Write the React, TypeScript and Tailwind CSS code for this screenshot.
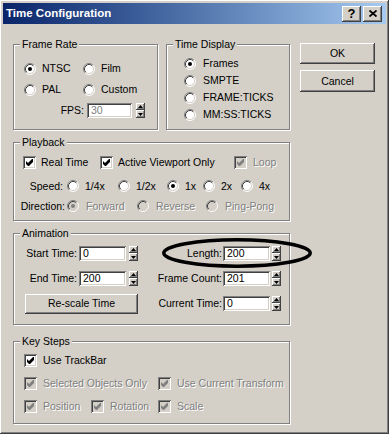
import React from 'react';

// classic 3D bevels
const raised = 'shadow-[inset_-1px_-1px_0_#404040,inset_1px_1px_0_#fff,inset_-2px_-2px_0_#808080,inset_2px_2px_0_#d4d0c8]';
const sunken = 'shadow-[inset_1px_1px_0_#808080,inset_-1px_-1px_0_#fff,inset_2px_2px_0_#404040,inset_-2px_-2px_0_#d4d0c8]';
const dimText = 'text-[#808080] [text-shadow:1px_1px_0_#fff]';

const Radio: React.FC<{ on?: boolean; off?: boolean }> = ({ on, off }) => (
    <svg width="12" height="12" viewBox="0 0 12 12" className="shrink-0">
        <circle cx="6" cy="6" r="5" fill={off ? '#d4d0c8' : '#fff'} />
        <path d="M2.11 9.89A5.5 5.5 0 0 1 9.89 2.11" stroke="#808080" fill="none" />
        <path d="M9.89 2.11A5.5 5.5 0 0 1 2.11 9.89" stroke="#fff" fill="none" />
        <path d="M2.82 9.18A4.5 4.5 0 0 1 9.18 2.82" stroke="#404040" fill="none" />
        <path d="M9.18 2.82A4.5 4.5 0 0 1 2.82 9.18" stroke="#d4d0c8" fill="none" />
        {on && <circle cx="6" cy="6" r="2" fill={off ? '#808080' : '#000'} />}
    </svg>
);

const Box: React.FC<{ on?: boolean; off?: boolean }> = ({ on, off }) => (
    <span className={`w-[13px] h-[13px] shrink-0 ${off ? 'bg-[#d4d0c8]' : 'bg-white'} ${sunken}`}>
        {on && (
            <svg width="13" height="13" viewBox="0 0 13 13">
                <polygon points="3,5 5,7 9,3 10,3 10,6 6,10 5,10 3,8" fill={off ? '#808080' : '#000'} />
            </svg>
        )}
    </span>
);

const RadioItem: React.FC<{ label: string; on?: boolean; off?: boolean; w?: string; gap?: string }> = ({ label, on, off, w = '', gap = 'gap-[6px]' }) => (
    <div className={`flex items-center ${gap} ${w}`}>
        <Radio on={on} off={off} />
        <span className={off ? dimText : ''}>{label}</span>
    </div>
);

const CheckItem: React.FC<{ label: string; on?: boolean; off?: boolean; w?: string; gap?: string }> = ({ label, on, off, w = '', gap = 'gap-[6px]' }) => (
    <div className={`flex items-center ${gap} ${w}`}>
        <Box on={on} off={off} />
        <span className={off ? dimText : ''}>{label}</span>
    </div>
);

const Group: React.FC<{ title: string; className?: string; children?: React.ReactNode }> = ({ title, className = '', children }) => (
    <div className={`relative border border-[#808080] shadow-[inset_1px_1px_0_#fff,1px_1px_0_#fff] ${className}`}>
        <span className="absolute left-[6px] -top-[7px] px-[2px] bg-[#d4d0c8] leading-[12px]">{title}</span>
        {children}
    </div>
);

const Spin = () => (
    <div className="w-[9px] h-[15px] flex flex-col shrink-0">
        <div className={`h-[7px] bg-[#d4d0c8] flex items-center justify-center ${raised}`}>
            <svg width="5" height="3" viewBox="0 0 5 3"><polygon points="2.5,0 5,3 0,3" fill="#000" /></svg>
        </div>
        <div className={`h-[8px] bg-[#d4d0c8] flex items-center justify-center ${raised}`}>
            <svg width="5" height="3" viewBox="0 0 5 3"><polygon points="0,0 5,0 2.5,3" fill="#000" /></svg>
        </div>
    </div>
);

const Field: React.FC<{ value: string; off?: boolean; w?: string }> = ({ value, off, w = 'w-[47px]' }) => (
    <div className={`${w} h-[15px] bg-white pl-[4px] leading-[15px] ${sunken} ${off ? 'text-[#808080]' : ''}`}>{value}</div>
);

const SpinRow: React.FC<{ label: string; labelW: string; value: string; fieldGap: string; spinGap: string }> = ({ label, labelW, value, fieldGap, spinGap }) => (
    <div className="flex items-center">
        <span className={`${labelW} text-right`}>{label}</span>
        <div className={fieldGap}><Field value={value} /></div>
        <div className={spinGap}><Spin /></div>
    </div>
);

export default function App() {
    return (
        <div className={`w-[389px] h-[434px] bg-[#d4d0c8] p-[3px] font-['Liberation_Sans',Arial,sans-serif] text-[10.5px] text-black leading-none ${raised}`}>
            {/* Title bar */}
            <div className="h-[21px] flex items-center bg-linear-to-r from-[#0a246a] to-[#a6caf0] pl-[3px] pr-[4px]">
                <span className="text-white font-bold text-[11.5px] flex-1">Time Configuration</span>
                <div className={`w-[19px] h-[16px] bg-[#d4d0c8] flex items-center justify-center font-bold text-[13px] ${raised}`}>?</div>
                <div className={`ml-[2px] w-[19px] h-[16px] bg-[#d4d0c8] flex items-center justify-center ${raised}`}>
                    <svg width="8" height="7" viewBox="0 0 8 7"><path d="M0.5 0.5L7.5 6.5M7.5 0.5L0.5 6.5" stroke="#000" strokeWidth="1.8" /></svg>
                </div>
            </div>

            <div className="px-[10px] pt-[20px]">
                {/* Frame rate / time display / buttons */}
                <div className="flex items-start">
                    <Group title="Frame Rate" className="w-[145px] h-[86px] pt-[13px] pl-[10px]">
                        <div className="h-[21px] flex items-center">
                            <RadioItem label="NTSC" on w="w-[59px]" />
                            <RadioItem label="Film" />
                        </div>
                        <div className="h-[21px] flex items-center">
                            <RadioItem label="PAL" w="w-[59px]" />
                            <RadioItem label="Custom" />
                        </div>
                        <div className="h-[21px] flex items-center">
                            <span className="w-[60px] text-right">FPS:</span>
                            <div className="ml-[3px]"><Field value="30" off w="w-[45px]" /></div>
                            <div className="ml-[4px]"><Spin /></div>
                        </div>
                    </Group>

                    <Group title="Time Display" className="ml-[8px] w-[124px] h-[86px] pt-[10px] pl-[17px]">
                        {['Frames', 'SMPTE', 'FRAME:TICKS', 'MM:SS:TICKS'].map((t, i) => (
                            <div key={t} className="h-[17px] flex items-center">
                                <RadioItem label={t} on={i === 0} gap="gap-[7px]" />
                            </div>
                        ))}
                    </Group>

                    <div className="ml-[10px] -mt-[1px] w-[75px] flex flex-col">
                        <button className={`h-[21px] bg-[#d4d0c8] ${raised}`}>OK</button>
                        <button className={`mt-[6px] h-[22px] bg-[#d4d0c8] ${raised}`}>Cancel</button>
                    </div>
                </div>

                {/* Playback */}
                <Group title="Playback" className="mt-[12px] w-[277px] h-[79px]">
                    <div className="mt-[9px] h-[20px] flex items-center pl-[9px]">
                        <CheckItem label="Real Time" on w="w-[77px]" gap="gap-[5px]" />
                        <CheckItem label="Active Viewport Only" on w="w-[134px]" gap="gap-[5px]" />
                        <CheckItem label="Loop" on off />
                    </div>
                    <div className="mt-[4px] h-[20px] flex items-center">
                        <span className="w-[49px] text-right">Speed:</span>
                        <div className="ml-[4px] flex items-center">
                            <RadioItem label="1/4x" w="w-[51px]" />
                            <RadioItem label="1/2x" w="w-[49px]" />
                            <RadioItem label="1x" on w="w-[36px]" />
                            <RadioItem label="2x" w="w-[38px]" />
                            <RadioItem label="4x" />
                        </div>
                    </div>
                    <div className="h-[20px] flex items-center">
                        <span className="w-[51px] text-right">Direction:</span>
                        <div className="ml-[2px] flex items-center">
                            <RadioItem label="Forward" on off w="w-[70px]" gap="gap-[7px]" />
                            <RadioItem label="Reverse" off w="w-[69px]" gap="gap-[7px]" />
                            <RadioItem label="Ping-Pong" off gap="gap-[7px]" />
                        </div>
                    </div>
                </Group>

                {/* Animation */}
                <Group title="Animation" className="mt-[12px] w-[277px] h-[92px] pt-[7px]">
                    <div className="h-[25px] flex items-center">
                        <SpinRow label="Start Time:" labelW="w-[63px]" value="0" fieldGap="ml-[2px]" spinGap="ml-[3px]" />
                        <SpinRow label="Length:" labelW="w-[84px]" value="200" fieldGap="ml-[1px]" spinGap="ml-[2px]" />
                    </div>
                    <div className="h-[25px] flex items-center">
                        <SpinRow label="End Time:" labelW="w-[63px]" value="200" fieldGap="ml-[2px]" spinGap="ml-[3px]" />
                        <SpinRow label="Frame Count:" labelW="w-[84px]" value="201" fieldGap="ml-[1px]" spinGap="ml-[2px]" />
                    </div>
                    <div className="h-[25px] flex items-center">
                        <button className={`ml-[11px] w-[113px] h-[20px] bg-[#d4d0c8] ${raised}`}>Re-scale Time</button>
                        <SpinRow label="Current Time:" labelW="w-[84px]" value="0" fieldGap="ml-[1px]" spinGap="ml-[2px]" />
                    </div>
                    {/* hand-drawn highlight around Length */}
                    <svg className="absolute left-[148px] top-[4px] overflow-visible" width="150" height="30" viewBox="0 0 150 30">
                        <ellipse cx="75" cy="15" rx="73.2" ry="13.2" fill="none" stroke="#000" strokeWidth="3.5" />
                    </svg>
                </Group>

                {/* Key steps */}
                <Group title="Key Steps" className="mt-[16px] w-[277px] h-[83px] pt-[7px] pl-[10px]">
                    <div className="h-[23px] flex items-center">
                        <CheckItem label="Use TrackBar" on />
                    </div>
                    <div className="h-[23px] flex items-center">
                        <CheckItem label="Selected Objects Only" on off w="w-[134px]" />
                        <CheckItem label="Use Current Transform" on off />
                    </div>
                    <div className="h-[23px] flex items-center">
                        <CheckItem label="Position" on off w="w-[67px]" />
                        <CheckItem label="Rotation" on off w="w-[67px]" />
                        <CheckItem label="Scale" on off />
                    </div>
                </Group>
            </div>
        </div>
    );
}
